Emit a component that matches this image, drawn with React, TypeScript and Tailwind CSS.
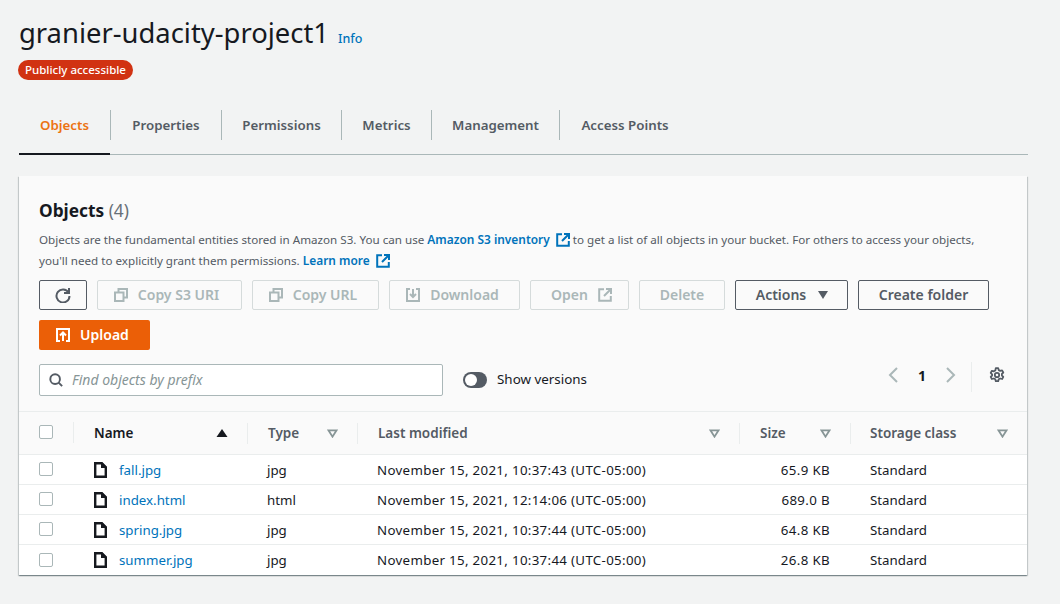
import React from 'react';

const rowGrid = 'grid grid-cols-[55px_174px_110px_382px_111px_1fr]';

const rows = [
  { name: 'fall.jpg', type: 'jpg', modified: 'November 15, 2021, 10:37:43 (UTC-05:00)', size: '65.9 KB' },
  { name: 'index.html', type: 'html', modified: 'November 15, 2021, 12:14:06 (UTC-05:00)', size: '689.0 B' },
  { name: 'spring.jpg', type: 'jpg', modified: 'November 15, 2021, 10:37:44 (UTC-05:00)', size: '64.8 KB' },
  { name: 'summer.jpg', type: 'jpg', modified: 'November 15, 2021, 10:37:44 (UTC-05:00)', size: '26.8 KB' },
];

const tabs = [
  { label: 'Properties', width: 'w-[111px]' },
  { label: 'Permissions', width: 'w-[120px]' },
  { label: 'Metrics', width: 'w-[90px]' },
  { label: 'Management', width: 'w-[128px]' },
  { label: 'Access Points', width: 'w-[131px]' },
];

const External = ({ className }: { className: string }) => (
  <svg viewBox="0 0 14 14" className={className} fill="none" stroke="currentColor">
    <path d="M6 1.2H1.2v11.6h11.6V8" strokeWidth="2" />
    <path d="M8 1h5v5M13 1 6 8" strokeWidth="2" />
  </svg>
);

const Copy = () => (
  <svg viewBox="0 0 14 14" className="w-[14px] h-[14px]" fill="none" stroke="currentColor" strokeWidth="2">
    <path d="M4.5 4.5V1h8.5v8.5H9.5" />
    <rect x="1" y="4.5" width="8.5" height="8.5" />
  </svg>
);

const Download = () => (
  <svg viewBox="0 0 14 14" className="w-[14px] h-[14px]" fill="none" stroke="currentColor" strokeWidth="2">
    <path d="M4 1H1v12h12V1h-3" />
    <path d="M7 1v7.5M4 6l3 3 3-3" />
  </svg>
);

const Caret = () => (
  <svg viewBox="0 0 12 10" className="w-[11px] h-[9px] text-[#879596]" fill="none" stroke="currentColor" strokeWidth="2">
    <path d="M1.5 1.5h9L6 8.5z" />
  </svg>
);

const FileIcon = () => (
  <svg viewBox="0 0 13 16" className="w-[13px] h-[16px] text-[#16191f]" fill="none" stroke="currentColor" strokeWidth="2.4">
    <path d="M1.2 1.2h6.6l4 4v9.6H1.2z" />
    <path d="M7.8 1.2v4h4z" fill="currentColor" strokeWidth="1.6" />
  </svg>
);

const Checkbox = () => <div className="w-[14px] h-[14px] rounded-[2px] border border-[#aab7b8] bg-white" />;

const App = () => {
  return (
    <div className="w-[1060px] h-[604px] overflow-hidden bg-[#f2f3f3] text-[#16191f] text-[13.3px] font-['Noto_Sans',sans-serif]">
      <div className="pl-[19px] pr-[32px] pt-[14px]">
        <div className="flex items-baseline gap-[9px] h-[38px]">
          <h1 className="text-[27.4px] leading-[38px] font-normal">granier-udacity-project1</h1>
          <a className="text-[12.5px] text-[#0073bb] font-medium">Info</a>
        </div>
        <div className="mt-[8px] -ml-px w-[115px] h-[20px] rounded-full bg-[#d13212] text-white text-[11.5px] font-medium leading-[20px] text-center">
          Publicly accessible
        </div>

        {/* Tabs */}
        <div className="mt-[30px] h-[45px] border-b border-[#aab7b8] flex items-start text-[13.3px] font-semibold text-[#545b64]">
          <div className="relative w-[91px] h-[30px] leading-[30px] text-center text-[#ec7211]">
            Objects
            <div className="absolute left-0 top-[43px] h-[2px] bg-[#16191f] w-[91px]" />
          </div>
          {tabs.map((t) => (
            <div key={t.label} className={`${t.width} h-[30px] leading-[30px] text-center border-l border-[#aab7b8]`}>
              {t.label}
            </div>
          ))}
        </div>

        {/* Objects card */}
        <div className="mt-[21px] w-[1008px] h-[399px] bg-[#fafafa] shadow-[0_1px_1px_0_rgba(0,28,36,0.3),1px_1px_1px_0_rgba(0,28,36,0.15),-1px_1px_1px_0_rgba(0,28,36,0.15)]">
          <div className="px-[20px] pt-[23px] h-[236px] border-b border-[#eaeded]">
            <h2 className="text-[17.3px] leading-[24px] font-bold">
              Objects <span className="font-normal text-[#687078]">(4)</span>
            </h2>
            <p className="mt-[6px] text-[11.64px] leading-[20px] text-[#545b64] whitespace-nowrap">
              Objects are the fundamental entities stored in Amazon S3. You can use{' '}
              <a className="font-semibold text-[11.9px] text-[#0073bb]">
                Amazon S3 inventory
                <External className="inline-block w-[14px] h-[14px] ml-[6px] align-[-3px]" />
              </a>{' '}
              to get a list of all objects in your bucket. For others to access your objects,
              <br />
              you'll need to explicitly grant them permissions.{' '}
              <a className="font-semibold text-[11.9px] text-[#0073bb]">
                Learn more
                <External className="inline-block w-[14px] h-[14px] ml-[6px] align-[-3px]" />
              </a>
            </p>

            <div className="mt-[9px] flex flex-wrap gap-y-[10px] gap-x-[10px] text-[14px] font-semibold w-[960px]">
              <button className="w-[48px] h-[30px] flex items-center justify-center rounded-[2px] border border-[#545b64] text-[#545b64]">
                <svg viewBox="0 0 16 16" className="w-[16px] h-[16px]" fill="none" stroke="currentColor" strokeWidth="2">
                  <path d="M13.5 5.5A6.5 6.5 0 1 0 14.5 9" />
                  <path d="M14 1v5H9" />
                </svg>
              </button>
              <button className="w-[145px] h-[30px] pr-[6px] flex items-center justify-center gap-[10px] rounded-[2px] border border-[#d5dbdb] text-[#aab7b8]">
                <Copy />
                <span className="-mt-[2px]">Copy S3 URI</span>
              </button>
              <button className="w-[127px] h-[30px] pr-[5px] flex items-center justify-center gap-[10px] rounded-[2px] border border-[#d5dbdb] text-[#aab7b8]">
                <Copy />
                <span className="-mt-[2px]">Copy URL</span>
              </button>
              <button className="w-[131px] h-[30px] pr-[4px] flex items-center justify-center gap-[10px] rounded-[2px] border border-[#d5dbdb] text-[#aab7b8]">
                <Download />
                <span className="-mt-[2px]">Download</span>
              </button>
              <button className="w-[99px] h-[30px] pl-[4px] flex items-center justify-center gap-[10px] rounded-[2px] border border-[#d5dbdb] text-[#aab7b8]">
                <span className="-mt-[2px]">Open</span>
                <External className="w-[14px] h-[14px]" />
              </button>
              <button className="w-[86px] h-[30px] flex items-center justify-center rounded-[2px] border border-[#d5dbdb] text-[#aab7b8]">
                <span className="-mt-[2px]">Delete</span>
              </button>
              <button className="w-[113px] h-[30px] pl-[2px] flex items-center justify-center gap-[11px] rounded-[2px] border border-[#545b64] text-[#545b64]">
                <span className="-mt-[2px]">Actions</span>
                <svg viewBox="0 0 12 10" className="w-[12px] h-[10px]" fill="currentColor">
                  <path d="M1 1h10L6 9z" />
                </svg>
              </button>
              <button className="w-[131px] h-[30px] flex items-center justify-center rounded-[2px] border border-[#545b64] text-[#545b64]">
                <span className="-mt-[2px]">Create folder</span>
              </button>
              <button className="w-[111px] h-[30px] pr-[4px] flex items-center justify-center gap-[10px] rounded-[2px] bg-[#eb5f07] text-white">
                <svg viewBox="0 0 14 14" className="w-[14px] h-[14px]" fill="none" stroke="currentColor" strokeWidth="2">
                  <path d="M4 13H1V1h12v12h-3" />
                  <path d="M7 13V5M4 7.5l3-3 3 3" />
                </svg>
                <span className="-mt-[2px]">Upload</span>
              </button>
            </div>

            <div className="mt-[14px] flex items-start">
              <div className="w-[404px] h-[32px] flex items-center gap-[9px] px-[9px] rounded-[2px] border border-[#aab7b8] bg-white">
                <svg viewBox="0 0 16 16" className="w-[14px] h-[14px] text-[#545b64]" fill="none" stroke="currentColor" strokeWidth="2.2">
                  <circle cx="7" cy="7" r="5.5" />
                  <path d="m11 11 4 4" />
                </svg>
                <span className="italic text-[#879596] text-[14px] -mt-[2px]">Find objects by prefix</span>
              </div>
              <div className="ml-[20px] mt-[7px] flex items-center gap-[10px] text-[13.4px]">
                <div className="w-[24px] h-[16px] rounded-full bg-[#545b64] p-[2px]">
                  <div className="w-[12px] h-[12px] rounded-full bg-white" />
                </div>
                <span className="-mt-[2px]">Show versions</span>
              </div>
              <div className="ml-auto -mt-[4px] mr-[2px] flex items-center h-[30px]">
                <svg viewBox="0 0 10 16" className="w-[10px] h-[16px] text-[#aab7b8] mr-[20px]" fill="none" stroke="currentColor" strokeWidth="2">
                  <path d="M9 1 2 8l7 7" />
                </svg>
                <span className="font-bold text-[14px] w-[8px] text-center">1</span>
                <svg viewBox="0 0 10 16" className="w-[10px] h-[16px] text-[#aab7b8] ml-[20px]" fill="none" stroke="currentColor" strokeWidth="2">
                  <path d="m1 1 7 7-7 7" />
                </svg>
                <div className="ml-[15px] mt-[3px] h-[30px] border-l border-[#eaeded]" />
                <svg viewBox="0 0 16 16" className="ml-[17px] w-[16px] h-[16px] text-[#545b64]" fill="none" stroke="currentColor" strokeWidth="1.8" strokeLinejoin="round">
                  <circle cx="8" cy="8" r="2.2" />
                  <path d="M6.8 1.2h2.4l.5 1.9 1.5.8 1.9-.5 1.2 2.1-1.4 1.4v1.6l1.4 1.4-1.2 2.1-1.9-.5-1.5.8-.5 1.9H6.8l-.5-1.9-1.5-.8-1.9.5-1.2-2.1 1.4-1.4V7.3L1.7 5.9l1.2-2.1 1.9.5 1.5-.8z" />
                </svg>
              </div>
            </div>
          </div>

          {/* Table header */}
          <div className={`${rowGrid} h-[43px] items-center font-semibold text-[13.5px] text-[#545b64] border-b border-[#eaeded]`}>
            <div className="pl-[20px] h-[21px] flex items-center border-r border-[#eaeded] -mt-[2px]">
              <Checkbox />
            </div>
            <div className="pl-[20px] pr-[19px] h-[21px] flex items-center justify-between border-r border-[#eaeded] text-[#16191f]">
              Name
              <svg viewBox="0 0 12 10" className="w-[12px] h-[10px]" fill="currentColor">
                <path d="M6 1l5.5 8H.5z" />
              </svg>
            </div>
            <div className="pl-[20px] pr-[19px] h-[21px] flex items-center justify-between border-r border-[#eaeded]">
              Type
              <Caret />
            </div>
            <div className="pl-[20px] pr-[19px] h-[21px] flex items-center justify-between border-r border-[#eaeded]">
              Last modified
              <Caret />
            </div>
            <div className="pl-[20px] pr-[19px] h-[21px] flex items-center justify-between border-r border-[#eaeded]">
              Size
              <Caret />
            </div>
            <div className="pl-[19px] pr-[19px] h-[21px] flex items-center justify-between">
              Storage class
              <Caret />
            </div>
          </div>

          {/* Table rows */}
          <div className="bg-white">
            {rows.map((r, i) => (
              <div
                key={r.name}
                className={`${rowGrid} h-[30px] items-center ${i < rows.length - 1 ? 'border-b border-[#eaeded]' : ''}`}
              >
                <div className="pl-[20px] -mt-px">
                  <Checkbox />
                </div>
                <div className="pl-[20px] flex items-center gap-[12px]">
                  <FileIcon />
                  <a className="text-[#0073bb] pt-[2px]">{r.name}</a>
                </div>
                <div className="pl-[19px] pt-[2px]">{r.type}</div>
                <div className="pl-[19px] pt-[2px] tracking-[0.32px]">{r.modified}</div>
                <div className="pr-[21px] pt-[2px] text-right tracking-[0.35px]">{r.size}</div>
                <div className="pl-[19px] pt-[2px]">Standard</div>
              </div>
            ))}
          </div>
        </div>
      </div>
    </div>
  );
};

export default App;
